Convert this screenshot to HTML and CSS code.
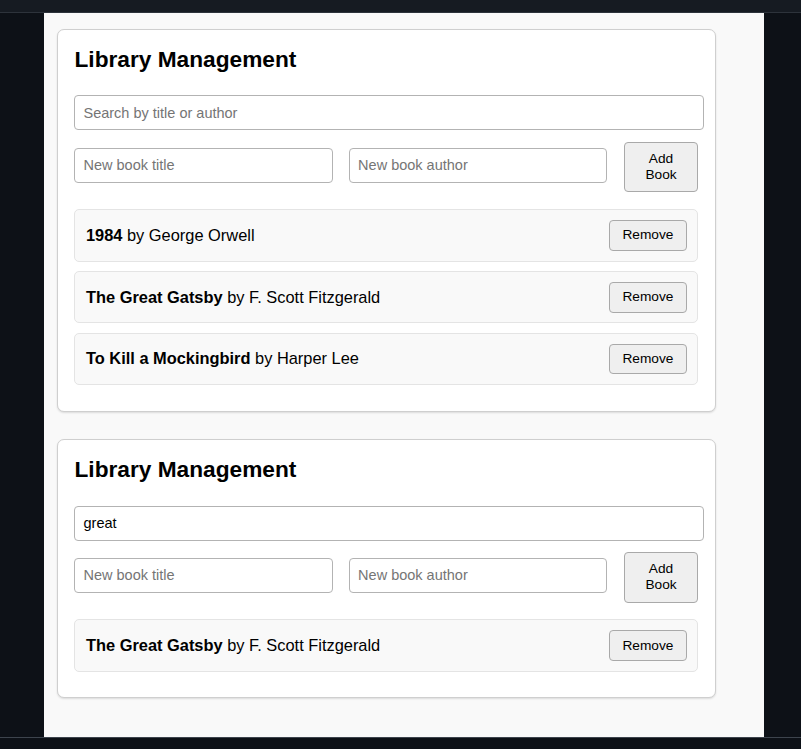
FILE: index.html
```html
<!DOCTYPE html>
<html lang="en">
<head>
<meta charset="utf-8">
<title>Library Management</title>
<link rel="stylesheet" href="styles.css">
</head>
<body>
<div class="topbar"></div>
<div class="stage">
  <main class="panel">
    <section class="card">
      <h2 class="card-title">Library Management</h2>
      <input class="search" type="text" placeholder="Search by title or author">
      <div class="add-row">
        <input class="field" type="text" placeholder="New book title">
        <input class="field" type="text" placeholder="New book author">
        <button class="btn btn-add">Add Book</button>
      </div>
      <ul class="book-list">
        <li class="book"><span class="book-text"><strong>1984</strong> by George Orwell</span><button class="btn btn-remove">Remove</button></li>
        <li class="book"><span class="book-text"><strong>The Great Gatsby</strong> by F. Scott Fitzgerald</span><button class="btn btn-remove">Remove</button></li>
        <li class="book"><span class="book-text"><strong>To Kill a Mockingbird</strong> by Harper Lee</span><button class="btn btn-remove">Remove</button></li>
      </ul>
    </section>
    <section class="card">
      <h2 class="card-title">Library Management</h2>
      <input class="search" type="text" placeholder="Search by title or author" value="great">
      <div class="add-row">
        <input class="field" type="text" placeholder="New book title">
        <input class="field" type="text" placeholder="New book author">
        <button class="btn btn-add">Add Book</button>
      </div>
      <ul class="book-list">
        <li class="book"><span class="book-text"><strong>The Great Gatsby</strong> by F. Scott Fitzgerald</span><button class="btn btn-remove">Remove</button></li>
      </ul>
    </section>
  </main>
</div>
<div class="bottombar"></div>
</body>
</html>
```

FILE: styles.css
```css
* { box-sizing: border-box; }

html, body {
  margin: 0;
  padding: 0;
  height: 749px;
  overflow: hidden;
  background: #0d1117;
  font-family: "Liberation Sans", Arial, sans-serif;
  color: #000;
}

.topbar {
  height: 13px;
  background: #161b22;
  border-bottom: 1px solid #2d333b;
}

.stage {
  height: 724px;
  padding-left: 44px;
  display: flex;
}

.panel {
  width: 720px;
  height: 100%;
  background: #f9f9f9;
  padding: 15.5px 0 0 12.7px;
}

.card {
  width: 659.5px;
  background: #fff;
  border: 1px solid #cfcfcf;
  border-radius: 7px;
  box-shadow: 0 1px 2px rgba(0, 0, 0, 0.12);
  padding: 16.3px 16.8px 16.3px 16.8px;
  margin-bottom: 27px;
}

.card-title {
  margin: 0 0 23.5px 0;
  font-size: 22.7px;
  line-height: 26px;
  font-weight: bold;
}

.search,
.field {
  display: block;
  height: 35px;
  border: 1px solid #b3b3b3;
  border-radius: 4px;
  background: #fff;
  padding: 0 8px;
  font-family: inherit;
  font-size: 14.5px;
  color: #000;
  outline: none;
}

.search::placeholder,
.field::placeholder {
  color: #757575;
}

.search {
  width: 630px;
  margin: 0 0 11.3px 0;
}

.add-row {
  display: flex;
  align-items: flex-start;
  gap: 16.5px;
  margin-bottom: 16.7px;
}

.field {
  flex: 1 1 0;
  min-width: 0;
  margin-top: 6px;
}

.btn {
  font-family: inherit;
  font-size: 13.7px;
  color: #000;
  background: #efefef;
  border: 1px solid #a9a9a9;
  border-radius: 4px;
  cursor: pointer;
}

.btn-add {
  flex: none;
  width: 74.7px;
  padding: 8px 20px;
  line-height: 16.4px;
  text-align: center;
}

.book-list {
  list-style: none;
  margin: 0;
  padding: 0;
}

.book {
  display: flex;
  align-items: center;
  justify-content: space-between;
  background: #f9f9f9;
  border: 1px solid #e4e4e4;
  border-radius: 5px;
  padding: 10px 10.5px;
  margin-bottom: 9.2px;
  height: 52.6px;
}

.book-text {
  font-size: 16.4px;
}

.btn-remove {
  width: 78px;
  height: 30.7px;
  padding: 0;
  line-height: 16px;
}

.bottombar {
  height: 12px;
  border-top: 1px solid #3d444d;
  background: #0d1117;
}
```
